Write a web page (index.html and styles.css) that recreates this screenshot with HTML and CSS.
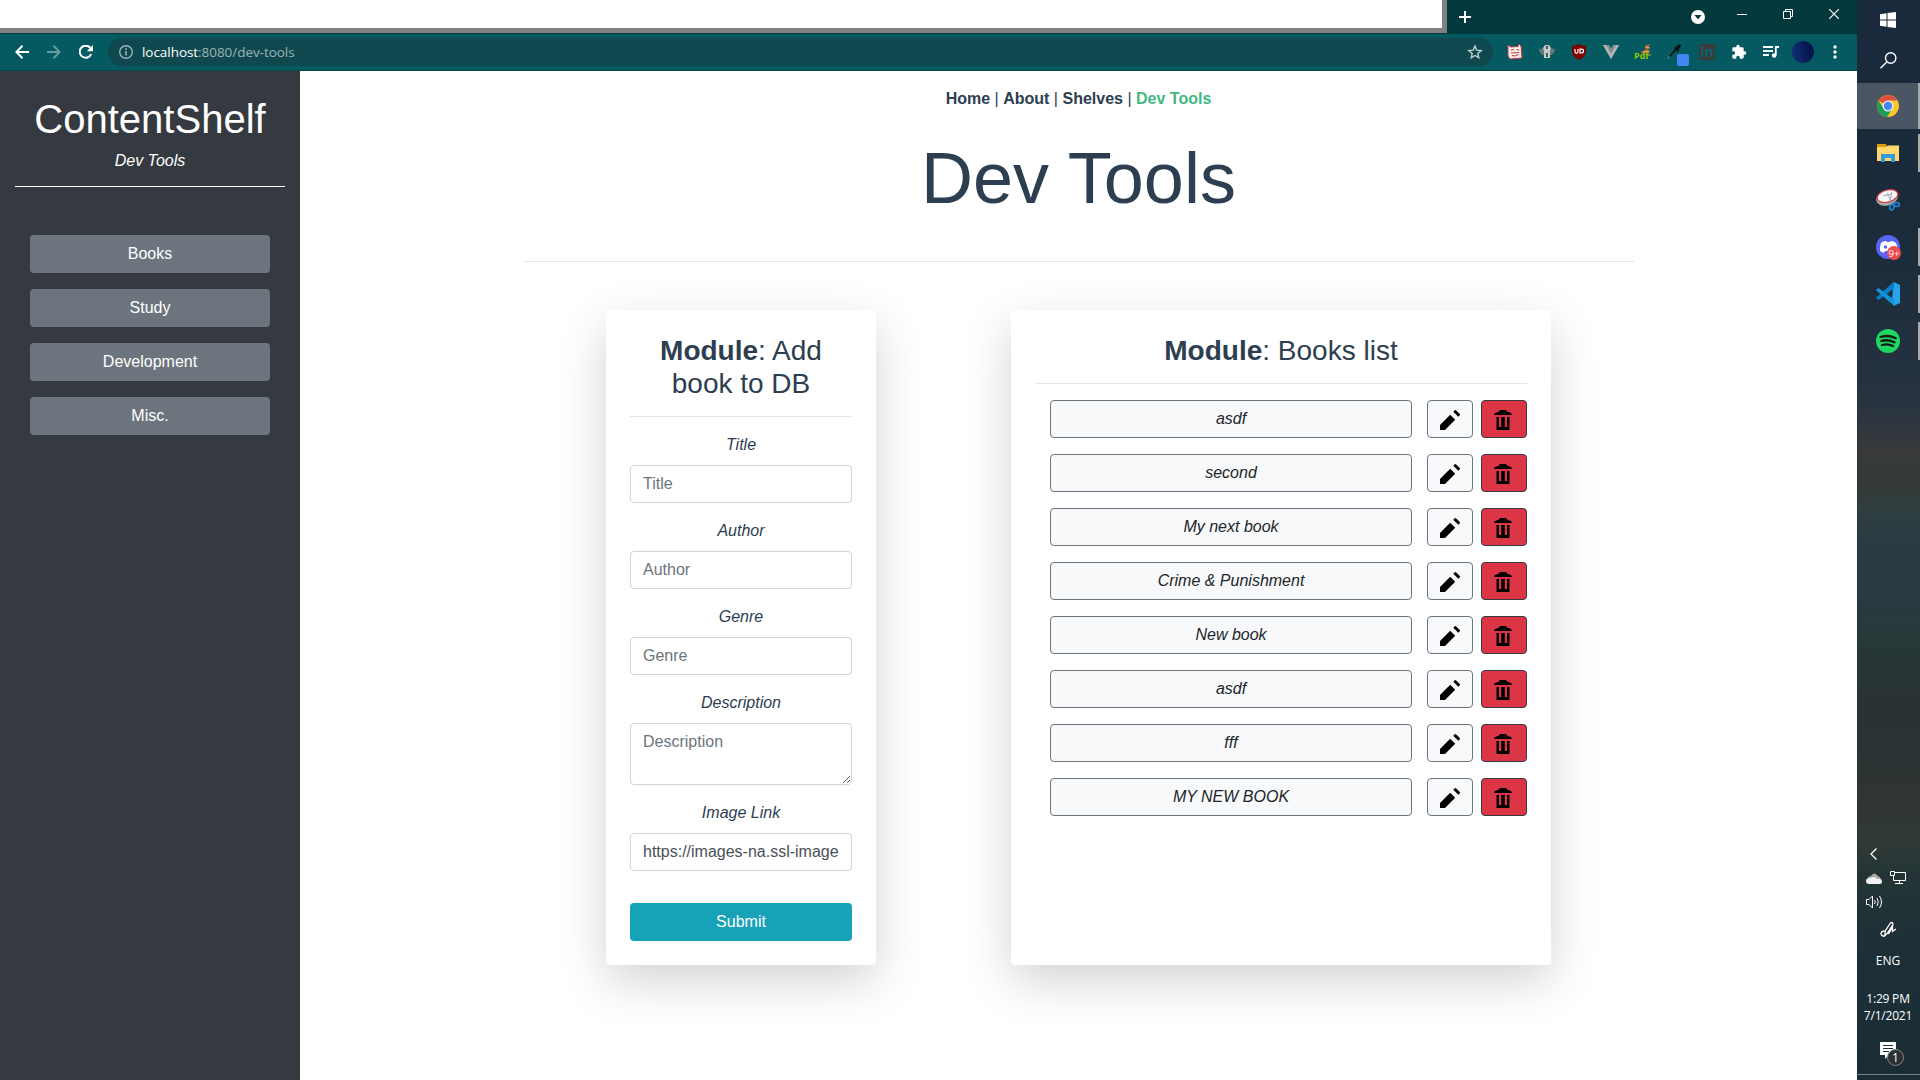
FILE: index.html
```html
<!DOCTYPE html>
<html lang="en">
<head>
<meta charset="utf-8">
<title>ContentShelf</title>
<link rel="stylesheet" href="styles.css">
</head>
<body>
<svg class="defs" width="0" height="0">
  <symbol id="pencil" viewBox="0 0 22 22"><path d="M1 16V21H6L16.200 10.800L11.200 5.800ZM12.800 4.200L15.800 1.200Q16.300 .700 16.900 1.200L20.800 5.100Q21.300 5.700 20.800 6.200L19.300 7.700L14.300 2.700Z" /></symbol>
  <symbol id="trash" viewBox="0 0 18 20"><path d="M6 0H12L13 1.500L17.300 3.200L18 5H0L.700 3.200L5 1.500ZM2.500 7H15.500V20H2.500ZM5 7V17H7.200V7ZM10.800 7V17H13V7Z" fill-rule="evenodd"/></symbol>
</svg>
<div class="browser">
  <header class="titlebar">
    <div class="tabs"></div>
    <svg class="newtab" width="12" height="12"><path d="M6 0V12M0 6H12" stroke="#fff" stroke-width="2"/></svg>
    <div class="window-controls">
      <span><svg width="14" height="14"><circle cx="7" cy="7" r="7" fill="#fff"/><path d="M3.500 5H10.500L7 9.500Z" fill="#03383d"/></svg></span>
      <span><svg width="10" height="10"><path d="M0 5.500H10" stroke="#fff"/></svg></span>
      <span><svg width="10" height="10" fill="none" stroke="#fff"><path d="M.5 2.500H7.500V9.500H.5ZM2.500 2.500V.5H9.500V7.500H7.500"/></svg></span>
      <span><svg width="10" height="10"><path d="M0 0L10 10M10 0L0 10" stroke="#fff" stroke-width="1.200"/></svg></span>
    </div>
  </header>
  <div class="toolbar">
    <span class="tool"><svg width="14" height="14" fill="none" stroke="#fff" stroke-width="2"><path d="M14 7H1.500M7.500 .7L1.300 7L7.500 13.300"/></svg></span>
    <span class="tool dim"><svg width="14" height="14" fill="none" stroke="#fff" stroke-width="2"><path d="M0 7H12.500M6.500 .7L12.700 7L6.500 13.300"/></svg></span>
    <span class="tool"><svg width="14" height="14"><path d="M12.200 9.200A6 6 0 1 1 11.300 2.800" fill="none" stroke="#fff" stroke-width="2"/><path d="M14 0V6.200H7.800Z" fill="#fff"/></svg></span>
    <div class="omnibox">
      <svg width="14" height="14"><circle cx="7" cy="7" r="6.300" fill="none" stroke="#9db3b5" stroke-width="1.400"/><path d="M7 6V10.500M7 3.300V5" stroke="#9db3b5" stroke-width="1.600"/></svg>
      <span class="url"><b>localhost</b>:8080/dev-tools</span>
      <svg class="star" width="16" height="16" viewBox="0 0 16 16"><path d="M8 2L9.700 6.100L14.200 6.500L10.800 9.400L11.800 13.800L8 11.500L4.200 13.800L5.200 9.400L1.800 6.500L6.300 6.100Z" fill="none" stroke="#c0cfd0" stroke-width="1.400"/></svg>
    </div>
    <div class="extensions">
      <span><svg width="16" height="16"><path d="M1 1L4 3L11 2.500L12 0L14 2L15 14L3 15L1 12Z" fill="#f5eeee" stroke="#c53a3a"/><path d="M4 6L7 5.500M9.500 5.500L12 6M4 9L12 8.500M5 11.500Q8 13 11.500 10.500" stroke="#cc3434" fill="none"/></svg></span>
      <span><svg width="16" height="16"><path d="M0 5L5 4V11Q1 11 0 5ZM16 5L11 4V11Q15 11 16 5Z" fill="#68777b"/><path d="M6 1H10L12 4L11 7V14H5V7L4 4Z" fill="#c3caca"/><path d="M8 2V5M8 9V13" stroke="#333" stroke-width="1.500"/></svg></span>
      <span><svg width="16" height="16"><path d="M8 0Q11 2 15 2V8Q14 13 8 16Q2 13 1 8V2Q5 2 8 0Z" fill="#800000"/><path d="M4 5V7.500Q4 9.300 5.500 9.300Q7 9.300 7 7.500V5M9 5.200V9H10Q12.500 9 12.500 7Q12.500 5.200 10 5.200Z" fill="none" stroke="#fff" stroke-width="1.200"/></svg></span>
      <span><svg width="16" height="14"><path d="M0 0H6L8 3.500L10 0H16L8 14Z" fill="#858b8d"/><path d="M0 0H3L8 8.500L13 0H16L8 14Z" fill="#b0b5b7"/></svg></span>
      <span class="pdf"><svg width="16" height="16"><path d="M5 8L10 6L11 1L15 0L13 6L16 7L9 10Z" fill="#ad622f"/><path d="M10 3L15 4M8 8L14 7" stroke="#efb279"/><path d="M12 11H16" stroke="#e79043"/></svg><i>Pdf</i></span>
      <span class="dropper"><svg width="16" height="16"><path d="M1 15L3 10L9 5" stroke="#507568" stroke-width="1.500" fill="none"/><path d="M2.500 12L10 4" stroke="#0a1a1a" stroke-width="2"/><path d="M7 4L9 3L11 1Q14 -1 14 2L12 5L11 8Z" fill="#071113"/></svg><i></i></span>
      <span class="linkedin"><i>in</i></span>
      <span><svg width="16" height="16" viewBox="0 0 24 24"><path d="M20.500 11H19V7a2 2 0 0 0-2-2h-4V3.500a2.500 2.500 0 0 0-5 0V5H4a2 2 0 0 0-2 2v3.800h1.500a2.700 2.700 0 0 1 0 5.400H2V20a2 2 0 0 0 2 2h3.800v-1.500a2.700 2.700 0 0 1 5.400 0V22H17a2 2 0 0 0 2-2v-4h1.500a2.500 2.500 0 0 0 0-5z" fill="#fff"/></svg></span>
      <span><svg width="16" height="14"><path d="M0 2H10M0 6H10M0 10H6" stroke="#fff" stroke-width="1.800"/><path d="M16 2H12.800V10" stroke="#fff" stroke-width="1.800" fill="none"/><circle cx="11.200" cy="10.500" r="2.300" fill="#fff"/></svg></span>
      <span><i class="avatar"></i></span>
      <span><svg width="4" height="14" fill="#fff"><circle cx="2" cy="2" r="1.700"/><circle cx="2" cy="7" r="1.700"/><circle cx="2" cy="12" r="1.700"/></svg></span>
    </div>
  </div>
  <div class="page">
    <aside class="sidebar">
      <h1>ContentShelf</h1>
      <p>Dev Tools</p>
      <hr>
      <nav>
        <button>Books</button><button>Study</button><button>Development</button><button>Misc.</button>
      </nav>
    </aside>
    <main>
      <nav class="links"><a>Home</a> | <a>About</a> | <a>Shelves</a> | <a class="active">Dev Tools</a></nav>
      <h1>Dev Tools</h1>
      <hr class="divider">
      <div class="modules">
        <form class="card add">
          <h3><b>Module</b>: Add book to DB</h3>
          <hr>
          <label>Title</label><input placeholder="Title">
          <label>Author</label><input placeholder="Author">
          <label>Genre</label><input placeholder="Genre">
          <label>Description</label><textarea placeholder="Description"></textarea>
          <label>Image Link</label><input value="https://images-na.ssl-image">
          <button type="button" class="submit">Submit</button>
        </form>
        <section class="card list">
          <h3><b>Module</b>: Books list</h3>
          <hr>
          <div class="book"><button class="name">asdf</button><button class="edit"><svg><use href="#pencil"/></svg></button><button class="delete"><svg><use href="#trash"/></svg></button></div>
          <div class="book"><button class="name">second</button><button class="edit"><svg><use href="#pencil"/></svg></button><button class="delete"><svg><use href="#trash"/></svg></button></div>
          <div class="book"><button class="name">My next book</button><button class="edit"><svg><use href="#pencil"/></svg></button><button class="delete"><svg><use href="#trash"/></svg></button></div>
          <div class="book"><button class="name">Crime &amp; Punishment</button><button class="edit"><svg><use href="#pencil"/></svg></button><button class="delete"><svg><use href="#trash"/></svg></button></div>
          <div class="book"><button class="name">New book</button><button class="edit"><svg><use href="#pencil"/></svg></button><button class="delete"><svg><use href="#trash"/></svg></button></div>
          <div class="book"><button class="name">asdf</button><button class="edit"><svg><use href="#pencil"/></svg></button><button class="delete"><svg><use href="#trash"/></svg></button></div>
          <div class="book"><button class="name">fff</button><button class="edit"><svg><use href="#pencil"/></svg></button><button class="delete"><svg><use href="#trash"/></svg></button></div>
          <div class="book"><button class="name">MY NEW BOOK</button><button class="edit"><svg><use href="#pencil"/></svg></button><button class="delete"><svg><use href="#trash"/></svg></button></div>
        </section>
      </div>
    </main>
  </div>
</div>
<aside class="taskbar">
  <div class="apps">
    <span class="start"><svg width="16" height="16" fill="#fff"><path d="M0 2.300L6.500 1.300V7.500H0ZM7.500 1.100L16 0V7.500H7.500ZM0 8.500H6.500V14.800L0 13.800ZM7.500 8.500H16V16L7.500 15Z"/></svg></span>
    <span class="search"><svg width="17" height="17" fill="none" stroke="#fff" stroke-width="1.400"><circle cx="10.700" cy="6" r="5.200"/><path d="M7 9.800L.5 16.300"/></svg></span>
    <span class="app open active"><svg width="24" height="24" viewBox="0 0 24 24"><circle cx="12" cy="12" r="11" fill="#fbc62c"/><path d="M12 12L2.500 6.500A11 11 0 0 1 21.500 6.500H12Z" fill="#dd4f3e"/><path d="M2.500 6.500A11 11 0 0 0 11 23L16.500 14.500L12 12L7.500 14.500Z" fill="#1b9e5a"/><circle cx="12" cy="12" r="5.500" fill="#e8f0ec"/><circle cx="12" cy="12" r="4.200" fill="#4587f3"/></svg></span>
    <span class="app open"><svg width="22" height="18"><path d="M0 0H9L10 3H0Z" fill="#dc9b05"/><path d="M0 3H9L11 1.500H22V17H0Z" fill="#ffda6b"/><path d="M4 10H18V18H14V14H8V18H4Z" fill="#3897db"/></svg></span>
    <span class="app"><svg width="24" height="22"><ellipse cx="11" cy="9" rx="11" ry="7.500" transform="rotate(-15 11 9)" fill="#a5a8ab"/><ellipse cx="11.500" cy="7.200" rx="10.500" ry="6" transform="rotate(-15 11 7)" fill="#f7f7f7" stroke="#d93c38" stroke-width="1.200"/><path d="M7 7L16 5M11 4L14.500 11M16 3L14 12" stroke="#a0aab0" fill="none"/><g fill="none" stroke="#2185cd" stroke-width="1.700"><ellipse cx="16" cy="18" rx="2" ry="3" transform="rotate(25 16 18)"/><ellipse cx="20.500" cy="15.500" rx="3" ry="2"/></g></svg></span>
    <span class="app open"><svg width="25" height="25"><circle cx="12" cy="12" r="12" fill="#5865f2"/><path d="M5 8Q8 5.500 10 6L11 7H14L15 6Q18 6 20 8Q22 12 22 16L18 18L16.500 16H9L7.500 18L4 16Q3.500 12 5 8Z" fill="#fff"/><circle cx="9.500" cy="12" r="1.700" fill="#5865f2"/><circle cx="18" cy="18" r="7" fill="#ed4b4c"/><text x="12.500" y="21.500" class="count">9+</text></svg></span>
    <span class="app open"><svg width="24" height="24"><path d="M17.500 0L24 3V21L17.500 24L16 17L17 7Z" fill="#26a5ed"/><path d="M17.500 0L1 15L0 16L2.500 18L18 6.500Z" fill="#087fc8"/><path d="M0 8L2.500 6L18 17.500V24L1 9Z" fill="#1294db"/></svg></span>
    <span class="app open"><svg width="24" height="24"><circle cx="12" cy="12" r="12" fill="#1ed760"/><path d="M4.500 8Q12.500 5.500 19.800 9.300M5.300 12Q12 10 18.500 13.300M6 16Q12 14.300 17 17" fill="none" stroke="#101b14" stroke-width="2.300" stroke-linecap="round"/></svg></span>
  </div>
  <div class="tray">
    <span class="chevron"><svg width="7" height="12"><path d="M6.500 .5L1 6L6.500 11.500" fill="none" stroke="#fff" stroke-width="1.300"/></svg></span>
    <span class="status"><svg width="16" height="11"><path d="M1 7Q2 3 5 3Q8-2 12 3Q15 4 15 8Z" fill="#aaa"/><path d="M0 8Q0 5 4 5L8 4Q10 4 11 6Q16 5 16 9Q16 11 14 11H3Q0 11 0 8Z" fill="#f2f2f2"/></svg><svg width="16" height="14" fill="none" stroke="#fff"><path d="M5 1.500H15.500V9.500H3.500V5M9.500 9.500V12.500M5 12.500H13M.5 .5H4.500V4.500H.5Z"/></svg></span>
    <span class="sound"><svg width="17" height="14" fill="none" stroke="#fff"><path d="M.5 4.500H3L6.500 1V13L3 9.500H.5ZM8.500 5Q10 7 8.500 9M11 3Q13.500 7 11 11M13.500 1Q17.500 7 13.500 13"/></svg></span>
    <span class="pen"><svg width="17" height="17" fill="none" stroke="#fff" stroke-width="1.300"><path d="M4.500 10Q1 10 1 13Q2 16 5 15M4.500 15L5.500 9.500L10.500 2Q12.500 .5 13 3.500L7.500 12L4.500 15M8.500 13L12.500 6V10.500L16 8"/></svg></span>
    <span class="lang">ENG</span>
    <span class="clock">1:29 PM<br>7/1/2021</span>
    <span class="notice"><svg width="17" height="17"><path d="M0 0H16V13H9L5 17V13H0Z" fill="#fff"/><path d="M3 3.500H13M3 6.500H13M3 9.500H9" stroke="#1a2c34"/></svg><b>1</b></span>
  </div>
</aside>
</body>
</html>
```
FILE: styles.css
```css
* { box-sizing: border-box; }
body { margin: 0; width: 1920px; height: 1080px; display: flex; overflow: hidden; font: 16px/24px "Liberation Sans", Arial, sans-serif; color: #2c3e50; background: #fff; }
h1, h3, p, hr { margin: 0; font-weight: normal; }
hr { border: 0; height: 1px; background: #e5e5e5; }
i { font-style: normal; }
button { font: inherit; height: 38px; padding: 0; border: 0; border-radius: 4px; }
svg { display: block; flex: none; }
.defs { position: absolute; }

.browser { width: 1857px; display: flex; flex-direction: column; }
.titlebar { height: 34px; display: flex; background: #03383d; }
.tabs { width: 1447px; height: 33px; background: #fff; border: solid #808080; border-width: 0 5px 5px 0; }
.newtab { margin: 11px 0 0 12px; }
.window-controls { display: flex; margin-left: auto; height: 28px; }
.window-controls span { width: 46px; display: flex; align-items: center; justify-content: center; }
.window-controls span:first-child { padding-top: 5px; width: 42px; }
.toolbar { height: 37px; padding: 0 6px 0 6px; display: flex; align-items: center; background: #045a60; border-bottom: 1px solid #03464b; }
.tool { width: 32px; display: flex; justify-content: center; }
.dim { opacity: .4; }
.omnibox { width: 1385px; height: 28px; margin-left: 6px; padding: 0 10px 0 11px; display: flex; align-items: center; border-radius: 14px; background: #0f484e; }
.url { margin-left: 9px; font: 13.500px/20px "Open Sans", sans-serif; letter-spacing: -.05px; color: #9db3b5; }
.url b { font-weight: normal; color: #fff; }
.star { margin-left: auto; }
.extensions { display: flex; margin-left: 6px; }
.extensions span { width: 32px; height: 28px; display: flex; align-items: center; justify-content: center; position: relative; }
.pdf i { position: absolute; left: 7px; top: 11px; font: bold 9px/13px "Open Sans", sans-serif; color: #8cc800; }
.dropper i { position: absolute; left: 18px; top: 16px; width: 12px; height: 12px; border-radius: 2px; background: #4285f4; }
.linkedin i { width: 16px; height: 16px; border-radius: 1px; background: #3b3b3b; color: #07666c; font: bold 14px/15px "Open Sans", sans-serif; text-align: center; }
.avatar { width: 22px; height: 22px; border-radius: 50%; background: linear-gradient(80deg, #123078, #03103f); }

.page { flex: 1; display: flex; }
.sidebar { width: 300px; padding: 24px 15px 0; background: #343a40; color: #fff; text-align: center; }
.sidebar h1 { font-size: 40px; line-height: 48px; }
.sidebar p { margin-top: 6px; font-style: italic; }
.sidebar hr { margin-top: 13px; background: #fff; }
.sidebar nav { margin-top: 48px; padding: 0 15px; display: grid; gap: 16px; }
.sidebar button { background: #6c757d; color: #fff; }

main { flex: 1; display: flex; flex-direction: column; align-items: center; }
.links { margin-top: 16px; }
.links a { font-weight: bold; }
.links .active { color: #42b983; }
main h1 { margin-top: 24px; font-size: 72px; line-height: 86px; }
.divider { width: 1110px; margin-top: 40px; }
.modules { width: 1110px; padding: 48px 82.5px 0; display: flex; justify-content: space-between; }
.card { height: 655px; padding: 24px; border-radius: 4px; background: #fff; box-shadow: 0 16px 48px rgba(0,0,0,.175); display: flex; flex-direction: column; text-align: center; }
.card h3 { font-size: 28px; line-height: 33px; }
.card hr { width: 100%; margin: 16px 0; flex: none; }
.add { width: 270px; }
.add label { font-style: italic; margin-bottom: 8px; }
.add input, .add textarea { width: 100%; height: 38px; margin: 0 0 16px; padding: 6px 12px; border: 1px solid #ced4da; border-radius: 4px; background: #fff; color: #495057; font: inherit; }
.add textarea { height: 62px; }
.add ::placeholder { color: #6c757d; opacity: 1; }
.submit { margin-top: 16px; background: #17a2b8; color: #fff; }
.list { width: 540px; }
.book { display: flex; margin: 0 0 16px 15px; }
.book button { border: 1px solid #6c757d; background: #f8f9fa; color: #212529; display: flex; align-items: center; justify-content: center; }
.book .name { flex: 1; font-style: italic; }
.book .edit { width: 46px; margin: 0 8px 0 15px; }
.edit svg { width: 22px; height: 22px; margin-top: 2px; }
.book .delete { width: 46px; background: #dc3545; border-color: #343a40; }
.delete svg { width: 18px; height: 20px; margin: 2px 3px 0 0; }

.taskbar { width: 63px; display: flex; flex-direction: column; justify-content: space-between; background: linear-gradient(#1a293c, #1b2b3a 20%, #22303f 33%, #2a3440 38%, #38393b 41.500%, #353a39 45%, #2f3e3e 47%, #2a3b43 50%, #283942 55%, #273a3b 58%, #273635 61%, #2b3233 66%, #2b3334 70%, #303632 75%, #2f3a36 78%, #243436 81%, #1d3037 88%, #1a2c34); color: #fff; }
.apps span, .tray span { display: flex; align-items: center; justify-content: center; padding-right: 1px; }
.start { height: 40px; }
.search { height: 40px; margin-bottom: 3px; }
.app { height: 46px; margin-bottom: 1px; position: relative; }
.open::after { content: ""; position: absolute; right: 0; top: 4px; bottom: 4px; width: 2px; background: #a8aaab; }
.active.open { background: #4b5665; }
.active.open::after { top: 0; bottom: 0; }
.count { font: 9.500px "Open Sans", sans-serif; fill: #fff; }
.tray { height: 239px; font: 12px/17px "Open Sans", sans-serif; }
.tray .chevron { height: 26px; margin-right: 29px; }
.tray .status { height: 22px; gap: 8px; padding-right: 6px; }
.tray .sound { height: 26px; margin-right: 28px; }
.tray .pen { height: 28px; }
.tray .lang { height: 34px; }
.tray .clock { height: 43px; padding-top: 16px; text-align: center; white-space: nowrap; letter-spacing: -.2px; }
.tray .notice { height: 55px; padding-top: 7px; border-bottom: 1px solid #77838a; position: relative; }
.notice b { position: absolute; left: 30px; top: 29px; width: 17px; height: 17px; border: 1px solid #888; border-radius: 50%; background: #2b2f32; text-align: center; font: 12px/15px "Open Sans", sans-serif; }
```
